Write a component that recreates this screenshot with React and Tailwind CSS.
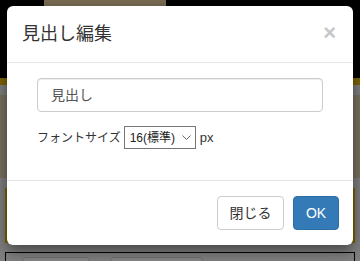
const font = { fontFamily: '"Liberation Sans", "Noto Sans CJK JP", sans-serif' }

function Chevron() {
  return (
    <svg width="9" height="5" viewBox="0 0 9 5" fill="none" stroke="#666" strokeWidth="1">
      <path d="M0.5 0.5l4 4 4-4" />
    </svg>
  )
}

export default function App() {
  return (
    <div className="relative w-[360px] h-[261px] overflow-hidden bg-[#7f7f7f]" style={font}>
      {/* dimmed page behind the dialog */}
      <div className="h-[78px] bg-black">
        <div className="ml-[44px] w-[122px] h-[6px] bg-[#7b6d55]"></div>
      </div>
      <div className="h-[7px] bg-[#7f6406]"></div>
      <div className="h-[10px]"></div>
      <div className="h-[83px] bg-[#7a715f]"></div>
      <div className="h-[10px]"></div>
      <div className="mx-[5px] h-[55px] border-x-[3px] border-[#7d6300]"></div>
      <div className="h-[9px]"></div>
      <div className="mx-[5px] h-[20px] border border-black flex gap-[20px] pl-[16px] pt-[4px]">
        <div className="w-[68px] h-[20px] rounded-[4px] border border-[#6e6e6e] bg-[#858585]"></div>
        <div className="w-[93px] h-[20px] rounded-[4px] border border-[#6e6e6e] bg-[#858585]"></div>
      </div>

      {/* dialog */}
      <div className="absolute left-[7px] top-[6px] w-[346px] h-[239px] bg-white rounded-[6px] shadow-[0_5px_15px_rgba(0,0,0,0.5)] flex flex-col">
        <div className="h-[57px] px-[15px] border-b border-[#e5e5e5] flex items-center justify-between">
          <h4 className="text-[18px] text-[#333] leading-none">見出し編集</h4>
          <span className="text-[22px] font-bold text-[#c7c7c7] leading-none mr-[2px] -mt-[3px]">×</span>
        </div>
        <div className="h-[117px] pt-[15px] px-[30px]">
          <div className="h-[34px] rounded-[4px] border border-[#ccc] px-[13px] flex items-center text-[14px] text-[#555] shadow-[inset_0_1px_1px_rgba(0,0,0,0.075)]">
            見出し
          </div>
          <div className="mt-[14px] flex items-center text-[12px] text-[#333]">
            <span>フォントサイズ</span>
            <div className="ml-[3px] w-[72px] h-[23px] border border-[#767676] flex items-center justify-between pl-[5px] pr-[4px] text-[12px] text-[#222]">
              <span>16(標準)</span>
              <Chevron />
            </div>
            <span className="ml-[4px] text-[13px]">px</span>
          </div>
        </div>
        <div className="flex-1 border-t border-[#e5e5e5] px-[14px] pt-[15px] flex justify-end gap-[9px]">
          <button className="w-[67px] h-[34px] rounded-[4px] border border-[#ccc] bg-white text-[14px] text-[#333]">
            閉じる
          </button>
          <button className="w-[46px] h-[34px] rounded-[4px] border border-[#2e6da4] bg-[#337ab7] text-[14px] text-white">
            OK
          </button>
        </div>
      </div>
    </div>
  )
}
